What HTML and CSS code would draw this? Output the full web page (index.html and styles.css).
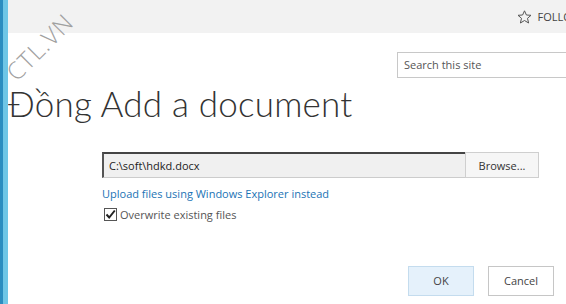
FILE: index.html
```html
<!DOCTYPE html>
<html lang="en">

<head>
    <meta charset="UTF-8">
    <meta name="viewport" content="width=device-width, initial-scale=1.0">
    <title>Add a document</title>
    <link rel="stylesheet" href="styles.css">
</head>

<body>
    <div id="page">
        <div id="sidebar"></div>
        <div id="main">
            <div id="topbar">
                <span id="follow">
                    <svg width="15" height="14" viewBox="0 0 15 14">
                        <polygon points="7.5,0.8 9.4,5 14,5.3 10.5,8.3 11.6,13 7.5,10.5 3.4,13 4.5,8.3 1,5.3 5.6,5" fill="none" stroke="#555" stroke-width="1"/>
                    </svg>
                    FOLLOW
                </span>
            </div>
            <div id="search-row">
                <div id="search">Search this site</div>
            </div>
            <h1 id="title">Đồng Add a document</h1>
            <form id="upload-form">
                <div class="file-row">
                    <div class="file-path">C:\soft\hdkd.docx</div>
                    <div class="browse">Browse...</div>
                </div>
                <a href="#" class="explorer-link">Upload files using Windows Explorer instead</a>
                <label class="overwrite"><span class="check">
                    <svg width="11" height="11" viewBox="0 0 11 11"><path d="M1.5 5.5 L4.2 8.5 L9.8 1.5" fill="none" stroke="#222" stroke-width="2"/></svg>
                </span>Overwrite existing files</label>
                <div class="actions">
                    <div class="btn ok">OK</div>
                    <div class="btn">Cancel</div>
                </div>
            </form>
        </div>
    </div>
    <div id="watermark">CTL.VN</div>
</body>

</html>
```

FILE: styles.css
```css
body {
    margin: 0;
    font-family: "Open Sans", "Noto Sans", sans-serif;
    background: #fff;
    overflow: hidden;
}

#page {
    display: flex;
    height: 304px;
}

#sidebar {
    width: 5px;
    border-left: 3px solid #2b8dc0;
    background: #6ec6e6;
}

#main {
    flex: 1;
    overflow: hidden;
}

#topbar {
    height: 33px;
    background: #f2f2f2;
    display: flex;
    justify-content: flex-end;
    align-items: center;
}

#follow {
    display: flex;
    align-items: center;
    gap: 6px;
    font-size: 11px;
    color: #444;
    margin-right: -16px;
    white-space: nowrap;
}

#search-row {
    display: flex;
    justify-content: flex-end;
    margin-top: 19px;
}

#search {
    width: 170px;
    height: 24px;
    border: 1px solid #c8c8c8;
    margin-right: -9px;
    font-size: 11px;
    color: #555;
    line-height: 24px;
    padding-left: 6px;
}

#title {
    margin: 0;
    font-family: Lato, "Open Sans", sans-serif;
    font-size: 35px;
    font-weight: 300;
    color: #333;
    line-height: 44px;
    margin-top: 3px;
    letter-spacing: 0.2px;
}

#upload-form {
    padding-left: 94px;
    margin-top: 27px;
}

.file-row {
    display: flex;
    width: 437px;
    height: 26px;
}

.file-path {
    flex: 1;
    background: #f0f0f0;
    border-top: 2px solid #444;
    border-left: 2px solid #555;
    border-bottom: 1px solid #ccc;
    font-size: 11px;
    color: #222;
    padding-left: 5px;
    line-height: 23px;
}

.browse {
    width: 72px;
    background: #f6f6f6;
    border: 1px solid #cfcfcf;
    font-size: 11px;
    color: #333;
    text-align: center;
    line-height: 26px;
}

.explorer-link {
    display: block;
    margin-top: 8px;
    font-size: 11px;
    color: #1a73b5;
    text-decoration: none;
}

.overwrite {
    display: flex;
    align-items: center;
    gap: 3px;
    margin-top: 6px;
    margin-left: 2px;
    font-size: 11px;
    color: #555;
}

.check {
    width: 11px;
    height: 11px;
    border: 1px solid #555;
    display: flex;
}

.actions {
    display: flex;
    gap: 14px;
    margin-top: 44px;
    margin-left: 306px;
}

.btn {
    width: 64px;
    height: 28px;
    border: 1px solid #c6c6c6;
    font-size: 11px;
    color: #444;
    text-align: center;
    line-height: 28px;
    background: #fff;
}

.btn.ok {
    background: #e5f1fb;
    border-color: #c4dcee;
}

#watermark {
    position: absolute;
    left: -2px;
    top: 30px;
    transform: rotate(-45deg);
    font-size: 24px;
    font-weight: 300;
    color: #a0a0a0;
    letter-spacing: 1px;
}
```
